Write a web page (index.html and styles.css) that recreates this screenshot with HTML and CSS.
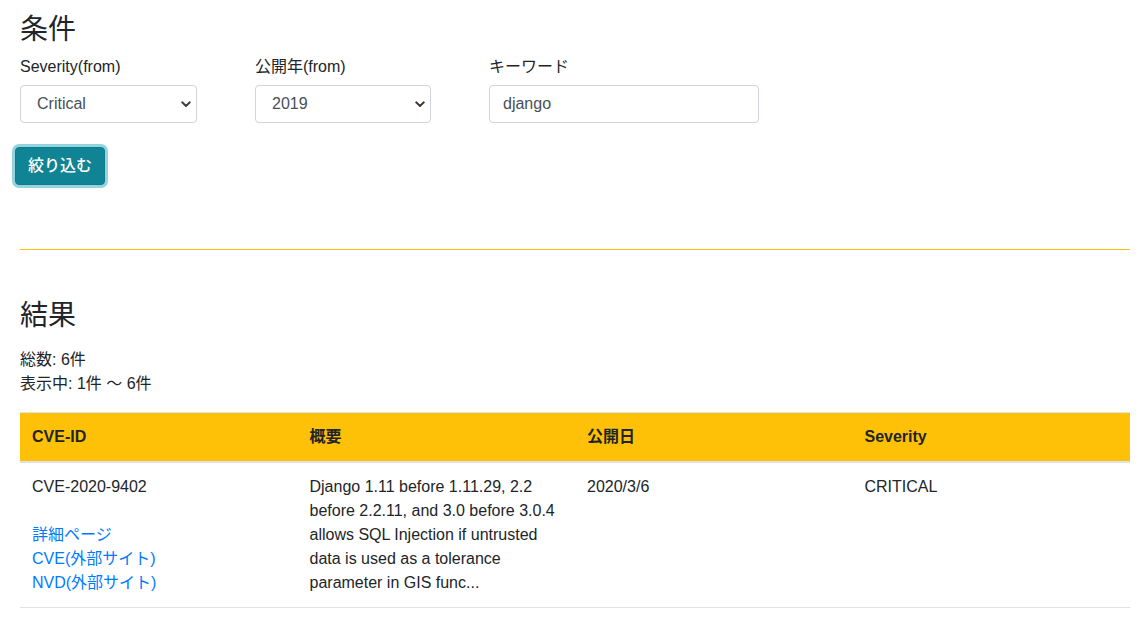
FILE: index.html
```html
<!DOCTYPE html>
<html lang="ja">
<head>
<meta charset="utf-8">
<title>CVE検索</title>
<link rel="stylesheet" href="styles.css">
</head>
<body>
<div class="page">
  <h3 class="heading">条件</h3>
  <form class="filters">
    <div class="field field-sev">
      <label class="label">Severity(from)</label>
      <div class="select-wrap">
        <select class="control select">
          <option>Critical</option>
        </select>
        <svg class="chev" width="10" height="7" viewBox="0 0 10 7"><path d="M1.2 1.3 L5 5 L8.8 1.3" fill="none" stroke="#3a3a3a" stroke-width="1.9" stroke-linecap="round" stroke-linejoin="round"/></svg>
      </div>
    </div>
    <div class="field field-year">
      <label class="label">公開年(from)</label>
      <div class="select-wrap">
        <select class="control select">
          <option>2019</option>
        </select>
        <svg class="chev" width="10" height="7" viewBox="0 0 10 7"><path d="M1.2 1.3 L5 5 L8.8 1.3" fill="none" stroke="#3a3a3a" stroke-width="1.9" stroke-linecap="round" stroke-linejoin="round"/></svg>
      </div>
    </div>
    <div class="field field-kw">
      <label class="label">キーワード</label>
      <input class="control input" type="text" value="django">
    </div>
  </form>
  <button class="btn" type="button">絞り込む</button>

  <hr class="divider">

  <h3 class="heading heading-result">結果</h3>
  <p class="summary">総数: 6件<br>表示中: 1件 〜 6件</p>

  <table class="results">
    <thead>
      <tr>
        <th>CVE-ID</th>
        <th>概要</th>
        <th>公開日</th>
        <th>Severity</th>
      </tr>
    </thead>
    <tbody>
      <tr>
        <td>CVE-2020-9402<br><br><a href="#" class="link">詳細ページ</a><br><a href="#" class="link">CVE(外部サイト)</a><br><a href="#" class="link">NVD(外部サイト)</a></td>
        <td>Django 1.11 before 1.11.29, 2.2 before 2.2.11, and 3.0 before 3.0.4 allows SQL Injection if untrusted data is used as a tolerance parameter in GIS func...</td>
        <td>2020/3/6</td>
        <td>CRITICAL</td>
      </tr>
    </tbody>
  </table>
</div>
</body>
</html>
```

FILE: styles.css
```css
html, body {
  margin: 0;
  padding: 0;
  background: #fff;
}
body {
  font-family: "Liberation Sans", "Noto Sans CJK JP", sans-serif;
  font-size: 16px;
  line-height: 1.5;
  color: #212529;
}
.page {
  width: 1110px;
  padding: 13px 15px 0 20px;
}
.heading {
  font-size: 28px;
  font-weight: 400;
  line-height: 1.2;
  margin: 0 0 8px;
}
.heading-result {
  margin-bottom: 16px;
}
.filters {
  display: flex;
  gap: 58px;
  margin: 0 0 24px;
}
.field-sev { width: 177px; }
.field-year { width: 176px; }
.field-kw { width: 270px; }
.label {
  display: block;
  margin-bottom: 6px;
  line-height: 24px;
}
.select-wrap {
  position: relative;
}
.control {
  display: block;
  box-sizing: border-box;
  width: 100%;
  height: 38px;
  border: 1px solid #ced4da;
  border-radius: 4px;
  background: #fff;
  color: #495057;
  font-family: "Liberation Sans", "Noto Sans CJK JP", sans-serif;
  font-size: 16px;
  line-height: 1.5;
  margin: 0;
}
.select {
  -webkit-appearance: none;
  appearance: none;
  padding: 0 30px 0 16px;
}
.input {
  padding: 0 13px;
  outline: none;
}
.chev {
  position: absolute;
  right: 6px;
  top: 16px;
  pointer-events: none;
}
.btn {
  display: block;
  box-sizing: border-box;
  height: 38px;
  margin-left: -5px;
  padding: 0 12px;
  border: 1px solid #117a8b;
  border-radius: 4px;
  background: #108494;
  color: #fff;
  font-family: "Liberation Sans", "Noto Sans CJK JP", sans-serif;
  font-size: 16px;
  font-weight: 500;
  line-height: 1.5;
  box-shadow: 0 0 0 3px rgba(58, 176, 195, 0.55);
}
.divider {
  margin: 64px 0 49px;
  height: 0;
  border: 0;
  border-top: 1px solid #ffc107;
}
.summary {
  margin: 0 0 16px;
}
.results {
  width: 1110px;
  border-collapse: collapse;
  table-layout: fixed;
}
.results th,
.results td {
  padding: 12px;
  text-align: left;
  vertical-align: top;
  border-top: 1px solid #dee2e6;
}
.results thead th {
  background: #ffc107;
  font-weight: 700;
  vertical-align: bottom;
  border-bottom: 2px solid #dee2e6;
}
.results tbody td {
  border-bottom: 1px solid #dee2e6;
}
.link {
  color: #007bff;
  text-decoration: none;
}
```
